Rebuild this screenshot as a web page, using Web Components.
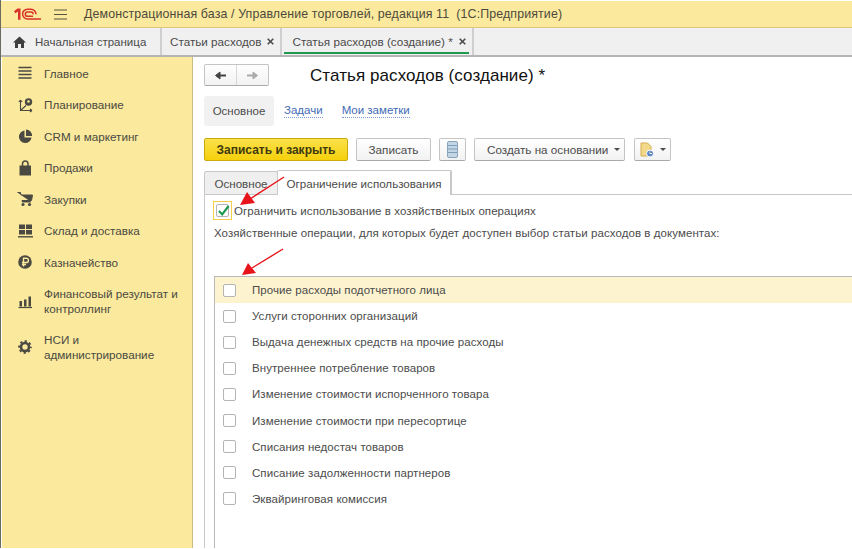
<!DOCTYPE html>
<html lang="ru">
<head>
<meta charset="utf-8">
<title>Статья расходов</title>
<style>
html,body{margin:0;padding:0;background:#fff;overflow:hidden}
body{font-family:"Liberation Sans",Arial,sans-serif;width:852px;height:549px}
</style>
</head>
<body>
<app-shell></app-shell>
<script>
class TitleBar extends HTMLElement{
    connectedCallback(){
        this.attachShadow({mode:'open'}).innerHTML = `
        <style>
        :host{display:flex;align-items:center;height:26px;margin-top:1px;background:#fbe99d;border-bottom:1px solid #d9c77e;color:#4d4a3c;font-size:12.4px;letter-spacing:.12px;white-space:pre}
        .logo{margin-left:13px;width:27px;height:13px;flex:none}
        .menu{margin-left:13px;width:13px;height:11px;margin-right:17px;flex:none}
        </style>
        <svg class="logo" viewBox="0 0 27 13">
          <path d="M0 3.200L3.500 .5H6.500V11.800H4V3.400L1.400 5.300Z" fill="#d8322a"/>
          <path d="M13.500 1.200A4.900 4.900 0 0 0 13.500 11H27M13.500 1.200H17A5 5 0 0 1 22 6.200M13.500 4A2.100 2.100 0 0 0 13.500 8.300H19M13.500 4H17A2.400 2.400 0 0 1 19.300 6.200" stroke="#d8322a" stroke-width="1.500" fill="none"/>
        </svg>
        <svg class="menu" viewBox="0 0 13 11"><path d="M0 1H13M0 5.500H13M0 10H13" stroke="#55523f" stroke-width="1.200"/></svg>
        <span>Демонстрационная база / Управление торговлей, редакция 11  (1С:Предприятие)</span>`
    }
}
customElements.define('title-bar', TitleBar)

class TabItem extends HTMLElement{
    connectedCallback(){
        this.attachShadow({mode:'open'}).innerHTML = `
        <style>
        :host{display:flex;align-items:center;height:27px;box-sizing:border-box;border-right:2px solid #cfcfcf;font-size:11.7px;color:#4b4b4b;position:relative;white-space:nowrap;padding:0 6px 0 8px;flex:none}
        :host([active]) .bar{display:block}
        :host([active]){padding-left:10px}
        .bar{display:none;position:absolute;left:2px;right:3px;bottom:1px;height:2px;background:#1f9a50}
        .x{margin-left:6px;width:7px;height:7px;flex:none}
        </style>
        <slot></slot>
        ${this.hasAttribute('closable') ? '<svg class="x" viewBox="0 0 7 7"><path d="M.7 .7L6.300 6.300M6.300 .7L.7 6.300" stroke="#4b4b4b" stroke-width="1.600"/></svg>' : ''}
        <div class="bar"></div>`
    }
}
customElements.define('tab-item', TabItem)

class TabBar extends HTMLElement{
    connectedCallback(){
        this.attachShadow({mode:'open'}).innerHTML = `
        <style>
        :host{display:flex;height:27px;background:#f0f0f0;border-bottom:2px solid #b5b5b5;box-sizing:content-box}
        </style>
        <slot></slot>`
    }
}
customElements.define('tab-bar', TabBar)

const NAV_ICONS = {
    main:'<path d="M1.500 2.500H14.500M1.500 6H14.500M1.500 9.500H14.500M1.500 13H14.500" stroke="#4a4a42" stroke-width="1.700"/>',
    plan:'<path d="M3.500 3V13.500H15M3.500 3L1.800 5M3.500 3L5.200 5M15 13.500L13 12M15 13.500L13 15M3.500 13.500L9 8.500" stroke="#4a4a42" stroke-width="1.100" fill="none"/><circle cx="11.500" cy="5" r="3.700" fill="#4a4a42"/><circle cx="11.500" cy="4.500" r="1.300" fill="#fbe99d"/>',
    crm:'<path d="M7.500 2.500A6.300 6.300 0 1 0 14.500 9.500H7.500Z" fill="#4a4a42"/><path d="M9 1.500A6 6 0 0 1 15 8H9Z" fill="#4a4a42"/>',
    sale:'<path d="M2.500 5.500H14V15.500H2.500Z" fill="#4a4a42"/><path d="M5.500 7.500V3.800A2.700 2.700 0 0 1 11 3.800V7.500" stroke="#4a4a42" stroke-width="1.500" fill="none"/>',
    buy:'<path d="M.5 1.500H3.500L4 4H15.500L14.500 9.500H5L5.300 11H14" fill="#4a4a42" stroke="#4a4a42"/><circle cx="6" cy="13.500" r="1.600" fill="#4a4a42"/><circle cx="12.500" cy="13.500" r="1.600" fill="#4a4a42"/>',
    store:'<path d="M2 1.500H8V6H2ZM9 1.500H15V6H9ZM2 7H8V11.500H2ZM9 7H15V11.500H9Z" fill="#4a4a42"/><path d="M1 13.800H16" stroke="#4a4a42" stroke-width="1.400"/>',
    cash:'<circle cx="8" cy="8" r="6.800" fill="#4a4a42"/><path d="M6.500 12.500V4.300H9.300A2.100 2.100 0 0 1 9.300 8.500H4.900M4.900 10.500H9" stroke="#fbe99d" stroke-width="1.400" fill="none"/>',
    fin:'<path d="M2.500 8H5V13.500H2.500ZM7 6.500H9.500V13.500H7ZM11.500 3.500H14V13.500H11.500Z" fill="#4a4a42"/><path d="M1.500 14.500H15" stroke="#4a4a42" stroke-width="1.200"/>',
    nsi:'<circle cx="8" cy="8" r="4" fill="none" stroke="#4a4a42" stroke-width="2.600"/><circle cx="8" cy="8" r="5.900" fill="none" stroke="#4a4a42" stroke-width="1.800" stroke-dasharray="2.320 2.320" stroke-dashoffset="1.160"/>'
}

class NavItem extends HTMLElement{
    connectedCallback(){
        this.attachShadow({mode:'open'}).innerHTML = `
        <style>
        :host{display:flex;align-items:center;font-size:11.7px;line-height:15px;color:#4a4a42;padding-left:15px;box-sizing:border-box;height:31.500px}
        :host([tall]){height:46px}
        svg{width:16px;height:16px;flex:none;margin-right:11px}
        </style>
        <svg viewBox="0 0 16 16">${NAV_ICONS[this.getAttribute('icon')]}</svg>
        <span><slot></slot></span>`
    }
}
customElements.define('nav-item', NavItem)

class SideNav extends HTMLElement{
    connectedCallback(){
        this.attachShadow({mode:'open'}).innerHTML = `
        <style>
        :host{display:block;width:190px;margin-left:1px;flex:none;background:#fbe99d;border-right:1px solid #c9bd85;box-sizing:content-box;padding-top:.4px}
        </style>
        <slot></slot>`
    }
}
customElements.define('side-nav', SideNav)

class ActionButton extends HTMLElement{
    connectedCallback(){
        this.attachShadow({mode:'open'}).innerHTML = `
        <style>
        :host{display:inline-flex;align-items:center;justify-content:center;box-sizing:border-box;height:23px;border:1px solid #c4c4c4;border-bottom-color:#aaa;border-radius:2px;background:linear-gradient(#fff,#f2f2f2);font-size:11.7px;color:#4b4b4b;white-space:nowrap}
        :host([primary]){background:linear-gradient(#fbe14a,#f5d00c);border-color:#c8a90e;color:#3f3a10;font-weight:bold;font-size:12px}
        </style>
        <slot></slot>`
    }
}
customElements.define('action-button', ActionButton)

class CheckBox extends HTMLElement{
    connectedCallback(){
        const on = this.hasAttribute('checked')
        this.attachShadow({mode:'open'}).innerHTML = `
        <style>
        :host{display:inline-block;width:13px;height:13px;box-sizing:border-box;border:1px solid #b4b4b4;border-radius:2px;background:#fff;position:relative;flex:none}
        svg{position:absolute;left:-1px;top:-2px;width:15px;height:15px}
        </style>
        ${on ? '<svg viewBox="0 0 15 15"><path d="M3 8L6.200 11.400L12.600 3" stroke="#1c9a4f" stroke-width="2.200" fill="none"/></svg>' : ''}`
    }
}
customElements.define('check-box', CheckBox)

class OpRow extends HTMLElement{
    connectedCallback(){
        this.attachShadow({mode:'open'}).innerHTML = `
        <style>
        :host{display:flex;align-items:center;height:26.100px;padding-left:8px;font-size:11.500px;color:#4b4b4b;letter-spacing:.07px}
        :host([current]){background:#fdf3cf}
        span{margin-left:16px}
        </style>
        <check-box></check-box><span><slot></slot></span>`
    }
}
customElements.define('op-row', OpRow)

class FormHead extends HTMLElement{
    connectedCallback(){
        this.attachShadow({mode:'open'}).innerHTML = `
        <style>
        :host{display:flex;align-items:center;height:22px;padding-top:7px}
        .nav{display:flex;width:65px;height:22px;box-sizing:border-box;border:1px solid #c4c4c4;border-bottom-color:#aaa;border-radius:2px;background:linear-gradient(#fff,#f2f2f2)}
        .nav div{flex:1;display:flex;align-items:center;justify-content:center}
        .nav div+div{border-left:1px solid #d8d8d8}
        svg{width:13px;height:11px}
        h1{margin:0 0 0 41px;padding-top:2px;font-size:17px;font-weight:normal;color:#111;white-space:nowrap;letter-spacing:.07px}
        </style>
        <div class="nav">
          <div><svg viewBox="0 0 13 11"><path d="M12 5.500H4" stroke="#444" stroke-width="2"/><path d="M6 2L1.500 5.500L6 9Z" stroke="#444" stroke-width="1" fill="#444"/></svg></div>
          <div><svg viewBox="0 0 13 11"><path d="M1 5.500H9" stroke="#aaa" stroke-width="2"/><path d="M7 2L11.500 5.500L7 9Z" stroke="#aaa" stroke-width="1" fill="#aaa"/></svg></div>
        </div>
        <h1><slot></slot></h1>`
    }
}
customElements.define('form-head', FormHead)

class SubNav extends HTMLElement{
    connectedCallback(){
        this.attachShadow({mode:'open'}).innerHTML = `
        <style>
        :host{display:flex;align-items:center;height:30px;margin-top:10px;font-size:11.500px}
        .cur{display:flex;align-items:center;justify-content:center;width:70px;height:30px;background:#f1f1f1;border-radius:3px;color:#4b4b4b}
        a{color:#3f6bb5;border-bottom:1px dotted #7d9ad0;line-height:13px;margin-left:10px}
        a+a{margin-left:19px}
        </style>
        <div class="cur">Основное</div><a>Задачи</a><a>Мои заметки</a>`
    }
}
customElements.define('sub-nav', SubNav)

class FormToolbar extends HTMLElement{
    connectedCallback(){
        this.attachShadow({mode:'open'}).innerHTML = `
        <style>
        :host{display:flex;align-items:center;gap:8px;margin-top:12px;height:23px}
        .caret{display:inline-block;border:3px solid transparent;border-top:3px solid #4b4b4b;border-bottom:0;margin-left:6px}
        svg{display:block}
        </style>
        <action-button primary style="width:144px">Записать и закрыть</action-button>
        <action-button style="width:75px">Записать</action-button>
        <action-button style="width:27px">
          <svg width="11" height="17" viewBox="0 0 11 17"><rect x=".5" y=".5" width="10" height="16" rx="1.500" fill="#c3d6e6" stroke="#8aa5bb"/><path d="M1 4.500H10M1 8H10M1 11.500H10" stroke="#7f9fb8"/></svg>
        </action-button>
        <action-button style="width:151px;justify-content:flex-start;padding-left:12px">Создать на основании<span class="caret"></span></action-button>
        <action-button style="width:37px;margin-left:1px">
          <svg width="14" height="16" viewBox="0 0 14 16"><path d="M1 1H7.500L11 4.500V14H1Z" fill="#f2d98a" stroke="#d5ad4c"/><circle cx="10" cy="11.500" r="3.500" fill="#5b87c4" stroke="#fff"/><path d="M10 9.500V11.500H12" stroke="#fff"/></svg>
          <span class="caret"></span>
        </action-button>`
    }
}
customElements.define('form-toolbar', FormToolbar)

class PageTabs extends HTMLElement{
    connectedCallback(){
        this.attachShadow({mode:'open'}).innerHTML = `
        <style>
        :host{display:flex;align-items:flex-end;height:25px;margin-top:9px;font-size:11.600px;color:#4b4b4b;margin-right:-11px;position:relative}
        .t{display:flex;align-items:center;justify-content:center;box-sizing:border-box;border:1px solid #c8c8c8;border-bottom:0;border-radius:2px 2px 0 0}
        .off{width:74px;height:24px;background:#efefef;border-bottom:1px solid #c8c8c8}
        .on{width:175px;height:25px;background:#fff;border-width:1px 2px 0 1px;margin-left:-1px}
        .rest{flex:1;border-bottom:1px solid #c8c8c8;height:0}
        </style>
        <div class="t off">Основное</div><div class="t on">Ограничение использования</div><div class="rest"></div>`
    }
}
customElements.define('page-tabs', PageTabs)

class TabPane extends HTMLElement{
    connectedCallback(){
        this.attachShadow({mode:'open'}).innerHTML = `
        <style>
        :host{display:block;flex:1;border-left:1px solid #c8c8c8;padding-left:8px;font-size:11.500px;color:#4b4b4b;letter-spacing:.07px;margin-right:-11px;min-height:0}
        .flag{display:flex;align-items:center;height:19px;margin-top:6px}
        .focus{display:flex;align-items:center;justify-content:center;width:19px;height:19px;box-sizing:border-box;border:1px solid #f3d04b;margin-right:2px}
        .lbl{margin:6px 0 0 1px;line-height:14px;height:14px;white-space:nowrap}
        .grid{margin:36px 0 0 1px;border:1px solid #b9b9b9;border-right:0;border-bottom:0;height:280px;box-sizing:border-box}
        </style>
        <div class="flag"><div class="focus"><check-box checked></check-box></div>Ограничить использование в хозяйственных операциях</div>
        <div class="lbl">Хозяйственные операции, для которых будет доступен выбор статьи расходов в документах:</div>
        <div class="grid"><slot></slot></div>`
    }
}
customElements.define('tab-pane', TabPane)

class AppShell extends HTMLElement{
    connectedCallback(){
        this.attachShadow({mode:'open'}).innerHTML = `
        <style>
        :host{display:flex;flex-direction:column;width:852px;height:548px;position:relative;border-left:1px solid #6b6b60;box-sizing:border-box;overflow:hidden}
        .body{display:flex;flex:1;min-height:0}
        .main{flex:1;display:flex;flex-direction:column;padding-left:11px;min-width:0;overflow:hidden}
        .arrows{position:absolute;left:-1px;top:0;width:852px;height:549px;pointer-events:none}
        svg.home{width:13px;height:12px;margin-right:9px;display:block;flex:none}
        tab-item.home{padding-left:12px;padding-right:0;width:161px;font-size:11.500px}
        </style>
        <title-bar></title-bar>
        <tab-bar>
          <tab-item class="home"><svg class="home" viewBox="0 0 13 12"><path d="M6.500 .5L13 6.500H11V12H8V8H5V12H2V6.500H0Z" fill="#3f3f3f"/></svg>Начальная страница</tab-item>
          <tab-item closable>Статьи расходов</tab-item>
          <tab-item closable active>Статья расходов (создание) *</tab-item>
        </tab-bar>
        <div class="body">
          <side-nav>
            <nav-item icon="main">Главное</nav-item>
            <nav-item icon="plan">Планирование</nav-item>
            <nav-item icon="crm">CRM и маркетинг</nav-item>
            <nav-item icon="sale">Продажи</nav-item>
            <nav-item icon="buy">Закупки</nav-item>
            <nav-item icon="store">Склад и доставка</nav-item>
            <nav-item icon="cash">Казначейство</nav-item>
            <nav-item icon="fin" tall>Финансовый результат и контроллинг</nav-item>
            <nav-item icon="nsi" tall>НСИ и администрирование</nav-item>
          </side-nav>
          <div class="main">
            <form-head>Статья расходов (создание) *</form-head>
            <sub-nav></sub-nav>
            <form-toolbar></form-toolbar>
            <page-tabs></page-tabs>
            <tab-pane>
              <op-row current>Прочие расходы подотчетного лица</op-row>
              <op-row>Услуги сторонних организаций</op-row>
              <op-row>Выдача денежных средств на прочие расходы</op-row>
              <op-row>Внутреннее потребление товаров</op-row>
              <op-row>Изменение стоимости испорченного товара</op-row>
              <op-row>Изменение стоимости при пересортице</op-row>
              <op-row>Списания недостач товаров</op-row>
              <op-row>Списание задолженности партнеров</op-row>
              <op-row>Эквайринговая комиссия</op-row>
            </tab-pane>
          </div>
        </div>
        <svg class="arrows" viewBox="0 0 852 549">
          <path d="M284 177L250 199" stroke="#e8141c" stroke-width="1.400"/>
          <path d="M240 205L247 192L255 203Z" fill="#e8141c"/>
          <path d="M283 249L252 268" stroke="#e8141c" stroke-width="1.400"/>
          <path d="M242 275L248 263L256 273Z" fill="#e8141c"/>
        </svg>`
    }
}
customElements.define('app-shell', AppShell)
</script>
</body>
</html>
